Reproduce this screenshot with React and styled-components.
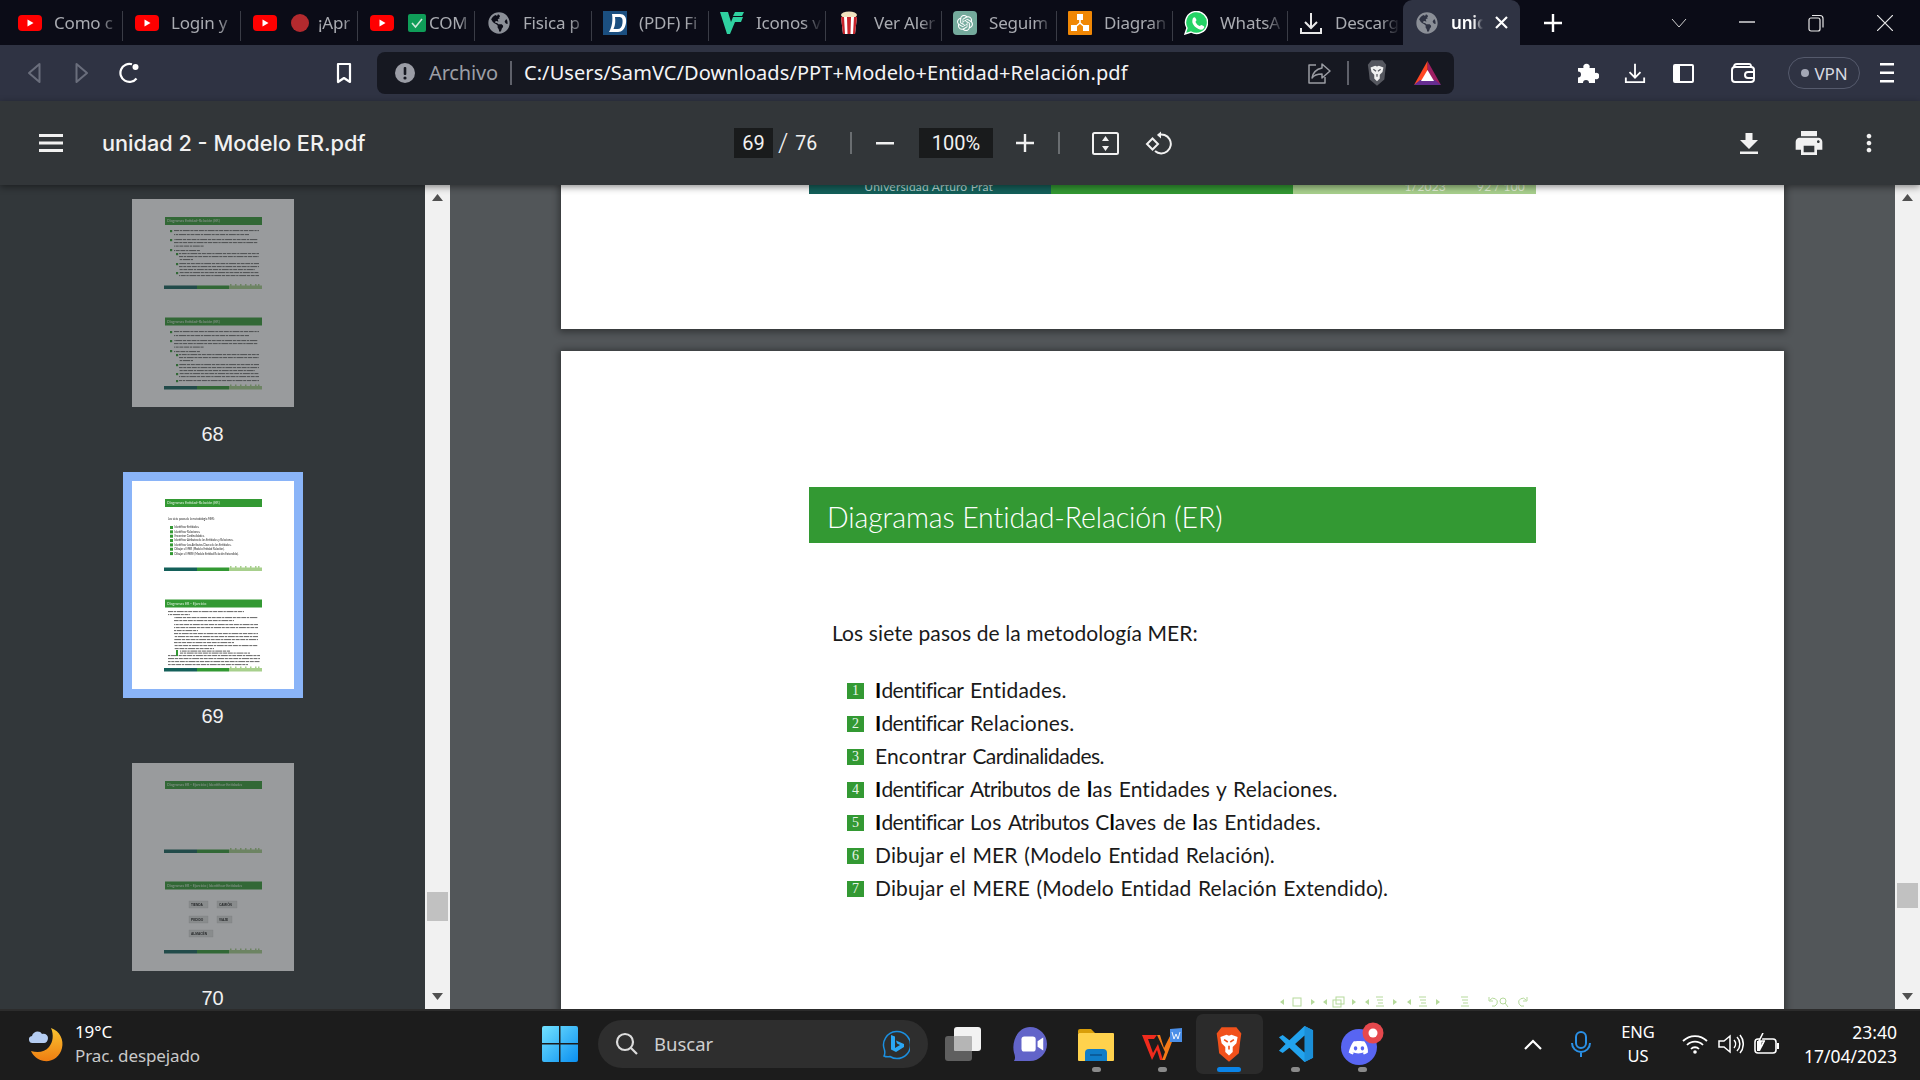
import React from 'react';
import styled, { createGlobalStyle } from 'styled-components';
import { FaGlobeAmericas } from 'react-icons/fa';
import { SiOpenai } from 'react-icons/si';
import { MdPrint, MdMoreVert } from 'react-icons/md';

const Global = createGlobalStyle`
  html, body { margin: 0; padding: 0; width: 1920px; height: 1080px; overflow: hidden; background: #1c1c1c; }
  * { box-sizing: border-box; }
`;

const Screen = styled.div`
  width: 1920px;
  height: 1080px;
  display: flex;
  flex-direction: column;
  font-family: "Noto Sans", sans-serif;
  overflow: hidden;
`;

/* ---------- tab strip ---------- */
const TabStrip = styled.div`
  height: 45px;
  flex: none;
  display: flex;
  padding-left: 6px;
  background: #0b0c17;
`;

const Tab = styled.div`
  width: ${(p) => p.$w}px;
  height: 45px;
  flex: none;
  display: flex;
  align-items: center;
  gap: ${(p) => p.$gap ?? 12}px;
  padding: 0 3px 0 ${(p) => p.$pad ?? 12}px;
  position: relative;
  &::after {
    content: "";
    display: ${(p) => (p.$last ? 'none' : 'block')};
    position: absolute;
    right: 0;
    top: 11px;
    width: 1px;
    height: 30px;
    background: #3a3c46;
  }
`;

const ActiveTab = styled(Tab)`
  background: #2f3343;
  border-radius: 9px 9px 0 0;
  padding-right: 12px;
`;

const TabTitle = styled.span`
  flex: 1;
  min-width: 0;
  margin: -1px 0 0 ${(p) => p.$ml || 0}px;
  white-space: nowrap;
  font-size: 17px;
  letter-spacing: -0.2px;
  color: ${(p) => (p.$active ? '#fff' : '#a9abb1')};
  font-weight: ${(p) => (p.$active ? 600 : 400)};
  -webkit-mask-image: linear-gradient(to right, #000 70%, transparent 100%);
  mask-image: linear-gradient(to right, #000 70%, transparent 100%);
`;

const NewTab = styled.div`
  width: 24px;
  margin-left: 21px;
  display: flex;
  align-items: center;
  justify-content: center;
`;

const WinButton = styled.div`
  width: ${(p) => p.$w}px;
  margin-left: ${(p) => p.$ml || 0}px;
  display: flex;
  align-items: center;
  justify-content: center;
`;

/* ---------- browser toolbar ---------- */
const Toolbar = styled.div`
  height: 56px;
  flex: none;
  display: flex;
  align-items: center;
  padding-left: 10px;
  background: #2f3343;
`;

const ToolSlot = styled.div`
  width: 48px;
  height: 42px;
  flex: none;
  margin-left: ${(p) => p.$ml || 0}px;
  display: flex;
  align-items: center;
  justify-content: center;
  color: #fff;
`;

const Address = styled.div`
  width: 1077px;
  height: 42px;
  flex: none;
  margin-left: 9px;
  padding: 0 13px 0 18px;
  display: flex;
  align-items: center;
  background: #161821;
  border-radius: 8px;
`;

const Scheme = styled.span`
  margin: -2px 0 0 14px;
  font-size: 20px;
  letter-spacing: -0.15px;
  color: #9c9ea6;
`;

const AddressSep = styled.span`
  width: 2px;
  height: 24px;
  margin: ${(p) => p.$m || '0 12px'};
  background: #5f616a;
`;

const Url = styled.span`
  margin-top: -2px;
  font-size: 20px;
  letter-spacing: 0.07px;
  color: #f4f4f6;
  white-space: nowrap;
`;

const AddressRight = styled.div`
  margin-left: auto;
  display: flex;
  align-items: center;
`;

const AddressGap = styled.span`
  width: 26px;
`;

const VpnPill = styled.div`
  width: 72px;
  height: 32px;
  flex: none;
  margin-left: 21px;
  display: flex;
  align-items: center;
  justify-content: center;
  gap: 6px;
  font-size: 17px;
  letter-spacing: -0.2px;
  color: #d8dae0;
  border: 1.5px solid #555a6c;
  border-radius: 16px;
  &::before {
    content: "";
    width: 8px;
    height: 8px;
    border-radius: 50%;
    background: #a3a7b5;
  }
`;

/* ---------- pdf toolbar ---------- */
const PdfBar = styled.div`
  height: 84px;
  flex: none;
  display: flex;
  align-items: center;
  position: relative;
  z-index: 3;
  background: #323639;
  color: #f1f1f1;
  box-shadow: 0 2px 7px rgba(0, 0, 0, 0.45);
`;

const PdfLeft = styled.div`
  width: 734px;
  flex: none;
  display: flex;
  align-items: center;
  padding-left: 39px;
`;

const DocTitle = styled.span`
  margin-left: 39px;
  font-family: "Inter", sans-serif;
  font-size: 21.7px;
  font-weight: 500;
  white-space: nowrap;
`;

const NumBox = styled.div`
  width: ${(p) => p.$w}px;
  height: 30px;
  flex: none;
  margin-left: ${(p) => p.$ml || 0}px;
  display: flex;
  align-items: center;
  justify-content: center;
  font-family: "Roboto", sans-serif;
  font-size: 20px;
  background: #191b1c;
`;

const PageTotal = styled.span`
  margin-left: 5px;
  width: 72px;
  flex: none;
  display: flex;
  align-items: center;
  gap: 7px;
  font-family: "Roboto", sans-serif;
  font-size: 19.5px;
`;

const Slash = styled.span`
  font-size: 26px;
  font-weight: 300;
`;

const BarSep = styled.span`
  width: 2px;
  height: 22px;
  flex: none;
  margin-left: ${(p) => p.$ml || 0}px;
  background: #6a6e71;
`;

const BarIcon = styled.div`
  width: 48px;
  height: 40px;
  flex: none;
  margin-left: ${(p) => p.$ml || 0}px;
  display: flex;
  align-items: center;
  justify-content: center;
`;

/* ---------- main area ---------- */
const Main = styled.div`
  height: 824px;
  flex: none;
  display: flex;
  overflow: hidden;
`;

const Sidebar = styled.div`
  width: 425px;
  flex: none;
  padding-top: 14px;
  display: flex;
  flex-direction: column;
  align-items: center;
  background: #32373a;
`;

const ThumbItem = styled.div`
  height: 282px;
  flex: none;
  display: flex;
  flex-direction: column;
  align-items: center;
`;

const Thumb = styled.div`
  width: 162px;
  height: 208px;
  flex: none;
  background: #fff;
  opacity: ${(p) => (p.$selected ? 1 : 0.5)};
  box-shadow: ${(p) => (p.$selected ? '0 0 0 9px #8ab4f8' : 'none')};
  svg { display: block; filter: blur(0.3px); }
`;

const ThumbLabel = styled.div`
  margin-top: 15px;
  font-family: "Liberation Sans", sans-serif;
  font-size: 20px;
  line-height: 24px;
  color: #f1f1f1;
`;

const Track = styled.div`
  width: 25px;
  flex: none;
  display: flex;
  flex-direction: column;
  align-items: center;
  padding: 9px 0;
  background: #f1f1f1;
`;

const TrackThumb = styled.div`
  width: 21px;
  height: ${(p) => p.$h}px;
  flex: none;
  margin-top: ${(p) => p.$top}px;
  background: #c1c1c1;
`;

const TrackDown = styled.div`
  margin-top: auto;
  display: flex;
`;

const Viewer = styled.div`
  flex: 1;
  padding-left: 111px;
  display: flex;
  flex-direction: column;
  align-items: flex-start;
  overflow: hidden;
  background: #525659;
`;

const Page = styled.div`
  width: 1223px;
  height: ${(p) => p.$h}px;
  flex: none;
  padding: ${(p) => p.$pt || 0}px 0 0 248px;
  margin-bottom: 22px;
  background: #fff;
  box-shadow: 0 1px 7px 2px rgba(0, 0, 0, 0.4);
`;

const FootStrip = styled.div`
  width: 727px;
  height: 9px;
  display: flex;
  overflow: hidden;
`;

const FootCell = styled.div`
  width: ${(p) => p.$w}px;
  flex: none;
  display: flex;
  justify-content: flex-end;
  gap: 31px;
  padding-right: ${(p) => p.$pr || 0}px;
  overflow: hidden;
  background: ${(p) => p.$bg};
  color: ${(p) => p.$fg};
  font-family: "Lato", sans-serif;
  font-size: 12px;
  letter-spacing: 0.2px;
  line-height: 3px;
  white-space: nowrap;
`;

const SlideHead = styled.div`
  width: 727px;
  height: 56px;
  display: flex;
  align-items: center;
  padding: 4px 0 0 18px;
  background: #339933;
  color: #fff;
  font-family: "Lato", sans-serif;
  font-size: 28.5px;
  font-weight: 300;
  letter-spacing: -0.1px;
  white-space: nowrap;
`;

const Intro = styled.div`
  margin: 75px 0 0 23px;
  font-family: "Lato", sans-serif;
  font-size: 21px;
  line-height: 30px;
  letter-spacing: 0.1px;
  color: #1a1a1a;
`;

const Steps = styled.ol`
  list-style: none;
  margin: 25px 0 0 38px;
  padding: 0;
`;

const Step = styled.li`
  height: 33px;
  display: flex;
  align-items: center;
  gap: 11px;
  font-family: "Lato", sans-serif;
  font-size: 21px;
  letter-spacing: 0.15px;
  word-spacing: 1px;
  color: #1a1a1a;
  white-space: pre;
`;

const StepNum = styled.span`
  width: 17px;
  height: 16px;
  flex: none;
  margin-top: 3px;
  display: flex;
  align-items: center;
  justify-content: center;
  background: #339933;
  color: #e8f4e8;
  font-family: "Liberation Serif", serif;
  font-size: 14px;
  letter-spacing: 0;
`;

const Heavy = styled.span`
  font-weight: 700;
  color: #000;
`;

const Tight = styled.span`
  letter-spacing: -0.55px;
`;

const NavIcons = styled.div`
  margin: 92px 0 0 471px;
  width: 250px;
  height: 12px;
  svg { display: block; }
`;

/* ---------- taskbar ---------- */
const Taskbar = styled.div`
  height: 71px;
  flex: none;
  display: flex;
  align-items: center;
  padding-bottom: 3px;
  position: relative;
  z-index: 4;
  background: #1c1c1c;
  border-top: 2px solid #2c2c2c;
  color: #fff;
`;

const Weather = styled.div`
  width: 542px;
  flex: none;
  padding-left: 28px;
  display: flex;
  align-items: center;
  gap: 11px;
`;

const TwoLines = styled.div`
  display: flex;
  flex-direction: column;
  align-items: ${(p) => p.$align || 'flex-start'};
  font-size: ${(p) => p.$fs || 17}px;
  line-height: 24px;
  letter-spacing: -0.1px;
  white-space: nowrap;
`;

const Muted = styled.span`
  color: #c9c9c9;
`;

const StartBtn = styled.div`
  width: 36px;
  height: 36px;
  flex: none;
  display: flex;
`;

const Search = styled.div`
  width: 330px;
  height: 48px;
  flex: none;
  margin-left: 20px;
  padding: 0 18px 0 17px;
  display: flex;
  align-items: center;
  background: #2e2e2e;
  border-radius: 24px;
`;

const SearchText = styled.span`
  margin: -1px 0 0 15px;
  flex: 1;
  font-size: 18.5px;
  color: #cfcfcf;
`;

const Apps = styled.div`
  margin-left: 2px;
  display: flex;
`;

const AppSlot = styled.div`
  width: 66.5px;
  height: 60px;
  flex: none;
  padding-top: 9px;
  display: flex;
  flex-direction: column;
  align-items: center;
  border-radius: 7px;
  background: ${(p) => (p.$active ? '#2b2b2b' : 'transparent')};
`;

const AppIcon = styled.div`
  height: 42px;
  flex: none;
  display: flex;
  align-items: center;
  justify-content: center;
`;

const AppDot = styled.span`
  width: ${(p) => (p.$active ? 24 : 9)}px;
  height: 5px;
  margin-top: auto;
  margin-bottom: 2px;
  border-radius: 3px;
  background: ${(p) => (p.$active ? '#0a84e8' : p.$none ? 'transparent' : '#8a8a8a')};
`;

const Tray = styled.div`
  margin-left: auto;
  padding-right: 23px;
  display: flex;
  align-items: center;
`;

const TraySlot = styled.div`
  width: ${(p) => p.$w}px;
  margin-left: ${(p) => p.$ml || 0}px;
  flex: none;
  display: flex;
  align-items: center;
  justify-content: center;
`;

const Clock = styled(TwoLines)`
  width: 112px;
  letter-spacing: 0;
`;

/* ---------- favicons and small drawings ---------- */
const YouTube = () => (
  <svg width="24" height="16" viewBox="0 0 24 16" style={{ flex: 'none' }}>
    <rect width="24" height="16" rx="4" fill="#f00" />
    <path d="M9.5 4.5v7l6-3.5z" fill="#fff" />
  </svg>
);

const RedDot = () => (
  <svg width="18" height="18" viewBox="0 0 18 18" style={{ flex: 'none' }}>
    <circle cx="9" cy="9" r="9" fill="#b32a2e" />
  </svg>
);

const CheckBox = () => (
  <svg width="18" height="18" viewBox="0 0 18 18" style={{ flex: 'none' }}>
    <rect width="18" height="18" rx="2" fill="#0f9d58" />
    <path d="M4 9l3.5 4L14 5" stroke="#cfe9db" strokeWidth="1.6" fill="none" />
  </svg>
);

const Globe = () => <FaGlobeAmericas size={22} color="#8b8f97" style={{ flex: 'none', margin: '0 1px' }} />;

const DLogo = () => (
  <svg width="24" height="24" viewBox="0 0 24 24" style={{ flex: 'none' }}>
    <rect width="24" height="24" fill="#1b4f80" />
    <path d="M9 3h8c4 0 7 3 6 9-1 6-4 9-8 9H6c3-5 4-12 3-18z" fill="#fff" />
    <path d="M12 6h4c3 0 4 2 3.5 6-.5 4-2 6-5 6h-4c2-4 2-8 1.500-12z" fill="#1b4f80" />
  </svg>
);

const VLogo = () => (
  <svg width="24" height="24" viewBox="0 0 24 24" style={{ flex: 'none' }}>
    <path d="M0 1h8l3 10 2-5h10l-2 5h-6l-5 12h-3z" fill="#2fd1a0" />
    <path d="M15 1h9l-2 4h-9z" fill="#2fd1a0" />
  </svg>
);

const Popcorn = () => (
  <svg width="18" height="24" viewBox="0 0 18 24" style={{ flex: 'none' }}>
    <ellipse cx="9" cy="4" rx="8" ry="3.5" fill="#f2e4c0" />
    <path d="M1 6h16l-2 17H3z" fill="#fff" />
    <path d="M1 6h3l1 17H3zM7 6h4l-.5 17h-3zM14 6h3l-2 17h-2z" fill="#c8242b" />
  </svg>
);

const GptLogo = () => (
  <svg width="24" height="24" viewBox="0 0 24 24" style={{ flex: 'none' }}>
    <rect width="24" height="24" rx="4" fill="#74aa9c" />
    <g transform="translate(4 4)"><SiOpenai size={16} color="#fff" /></g>
  </svg>
);

const DiagramLogo = () => (
  <svg width="24" height="24" viewBox="0 0 24 24" style={{ flex: 'none' }}>
    <rect width="24" height="24" rx="1" fill="#f08705" />
    <path d="M12 8v5M6 17l6-5 6 5" stroke="#fff" strokeWidth="1.6" fill="none" />
    <rect x="9" y="3" width="6" height="6" fill="#fff" />
    <rect x="3" y="14" width="6" height="6" fill="#fff" />
    <rect x="15" y="14" width="6" height="6" fill="#fff" />
  </svg>
);

const Whats = () => (
  <svg width="24" height="24" viewBox="0 0 24 24" style={{ flex: 'none' }}>
    <path d="M1 23l2-6a11 11 0 1 1 4 4z" fill="#25d366" stroke="#fff" strokeWidth="1.4" />
    <path transform="translate(5 5)" d="M4 2c1-1 2-1 2.500 0l1 2c0 1-1 1-1 2 1 2 2 3 4 4 1 0 1-1 2-1l2 1c1 .5 1 1.500 0 2.500-1 1.500-3 1.500-5 .5-3-1.500-5-3.500-6-6-.5-2 0-4 .5-5z" fill="#fff" />
  </svg>
);

const TrayDownload = ({ color = '#fff', size = 24 }) => (
  <svg width={size} height={size} viewBox="0 0 24 24" fill="none" stroke={color} strokeWidth="2" style={{ flex: 'none' }}>
    <path d="M12 2v15M6 11l6 6 6-6M2 17v5h20v-5" />
  </svg>
);

const Triangle = ({ flip, color = '#6a6e7c' }) => (
  <svg width="14" height="22" viewBox="0 0 14 22" fill="none" stroke={color} strokeWidth="2" strokeLinejoin="round" style={flip ? { transform: 'scaleX(-1)' } : undefined}>
    <path d="M12.500 2L2 11l10.500 9z" />
  </svg>
);

const Reload = () => (
  <svg width="22" height="22" viewBox="0 0 22 22" fill="none" stroke="#fff" strokeWidth="2.200">
    <path d="M17.500 16.500A9 9 0 1 1 13 2.300" />
    <circle cx="16.500" cy="5" r="3" fill="#fff" stroke="none" />
  </svg>
);

const Bookmark = () => (
  <svg width="16" height="22" viewBox="0 0 16 22" fill="none" stroke="#fff" strokeWidth="2.200" strokeLinejoin="round">
    <path d="M2 2h12v18l-6-4-6 4z" />
  </svg>
);

const InfoIcon = () => (
  <svg width="20" height="20" viewBox="0 0 20 20" style={{ flex: 'none' }}>
    <circle cx="10" cy="10" r="10" fill="#9b9da6" />
    <rect x="8.700" y="4" width="2.600" height="8" rx="1" fill="#161821" />
    <circle cx="10" cy="15" r="1.600" fill="#161821" />
  </svg>
);

const Share = () => (
  <svg width="24" height="24" viewBox="0 0 24 24" fill="none" stroke="#9a9ca3" strokeWidth="1.500" strokeLinejoin="round" style={{ flex: 'none' }}>
    <path d="M9 4H2v18h16v-6" />
    <path d="M15 3l8 7-8 7v-4c-5 0-8 1-10 4 1-6 5-9 10-10z" />
  </svg>
);

const Lion = ({ w, h, shield, face }) => (
  <svg width={w} height={h} viewBox="0 0 24 30" style={{ flex: 'none' }}>
    <path d="M6 1h12l4 5-1 7-1 9-8 7-8-7-1-9-1-7z" fill={shield} />
    <path d="M5 9l5-2 2 1 2-1 5 2-1 5-3 3v4l-3 3-3-3v-4l-3-3z" fill={face} />
    <path d="M8 11l3 2M16 11l-3 2M12 16v3" stroke={shield} strokeWidth="1.300" fill="none" />
  </svg>
);

const BatLogo = () => (
  <svg width="27" height="24" viewBox="0 0 27 24" style={{ flex: 'none' }}>
    <path d="M13.500 0L27 24 13.500 16z" fill="#9e1f63" />
    <path d="M13.500 0L0 24l13.500-8z" fill="#ff4724" />
    <path d="M0 24h27l-6-5H6z" fill="#662d91" />
    <path d="M13.500 9L20 20H7z" fill="#fff" />
  </svg>
);

const Puzzle = () => (
  <svg width="23" height="24" viewBox="0 0 23 24" fill="#fff">
    <path d="M2 7h5.500a3.200 3.200 0 1 1 6 0H19v5a3.200 3.200 0 1 1 0 6v4h-6a3 3 0 0 0-6 0H2v-5.500a3 3 0 0 0 0-6z" />
  </svg>
);

const SidePanel = () => (
  <svg width="21" height="19" viewBox="0 0 21 19" style={{ display: 'block' }}>
    <rect x="1" y="1" width="19" height="17" rx="1" fill="none" stroke="#fff" strokeWidth="2" />
    <rect x="1" y="1" width="6" height="17" fill="#fff" />
  </svg>
);

const Wallet = () => (
  <svg width="24" height="20" viewBox="0 0 24 20" fill="none" stroke="#fff" strokeWidth="2">
    <path d="M3 4c0-2 1-3 3-3h12c2 0 2 1 2 3" />
    <rect x="1" y="4" width="22" height="15" rx="3" />
    <path d="M23 9h-6a3 3 0 0 0 0 6h6" />
  </svg>
);

const Lines = ({ w, h, t, gap, color = '#fff' }) => (
  <svg width={w} height={h} viewBox={`0 0 ${w} ${h}`}>
    {[0, 1, 2].map((i) => (
      <rect key={i} y={i * gap} width={w} height={t} fill={color} />
    ))}
  </svg>
);

const FitPage = () => (
  <svg width="27" height="23" viewBox="0 0 27 23">
    <rect x="1" y="1" width="25" height="21" rx="1.500" fill="none" stroke="#f1f1f1" strokeWidth="2" />
    <path d="M13.500 4l3.500 5h-7zM13.500 19l-3.500-5h7z" fill="#f1f1f1" />
  </svg>
);

const RotatePage = () => (
  <svg width="27" height="27" viewBox="0 0 27 27" fill="none" stroke="#f1f1f1" strokeWidth="2">
    <path d="M7.500 8.500L2 14l5.500 5.500L13 14z" />
    <path d="M13 5a9.500 9.500 0 1 1-3 16" />
    <path d="M16 1.500v7L12 5z" fill="#f1f1f1" stroke="none" />
  </svg>
);

const SaveIcon = () => (
  <svg width="18" height="21" viewBox="0 0 18 21" fill="#f1f1f1" style={{ display: 'block' }}>
    <path d="M5.500 0h7v7H18l-9 9-9-9h5.500z" />
    <rect y="18.500" width="18" height="2.500" />
  </svg>
);

const ScrollArrow = ({ down }) => (
  <svg width="11" height="7" viewBox="0 0 11 7" style={{ display: 'block', flex: 'none' }}>
    <path d={down ? 'M0 0h11L5.500 7z' : 'M5.500 0L11 7H0z'} fill="#505050" />
  </svg>
);

/* ---------- thumbnails ---------- */
const Mini = ({ y, title }) => (
  <g>
    <rect x="33" y={y} width="97" height="8" fill="#339933" />
    <text x="35" y={y + 5.4} fontSize="3.700" fill="#dff0df" fontFamily="Lato, sans-serif">{title}</text>
    <rect x="32" y={y + 68.500} width="33" height="3.500" fill="#14605a" />
    <rect x="65" y={y + 68.500} width="32" height="3.500" fill="#339933" />
    <rect x="97" y={y + 68.500} width="33" height="3.500" fill="#a8d08d" />
    {[98, 103, 108, 113, 118, 123, 126].map((x) => (
      <rect key={x} x={x} y={y + 67} width="1.500" height="2" fill="#a8d08d" />
    ))}
  </g>
);

// body text of a page thumbnail is too small to read, so it is drawn as dashed word runs
const Body = ({ rows }) => (
  <g stroke="#666" strokeWidth="1" strokeDasharray="5 .7 2.300 .7 7 .7 3.100 .7 4 .7">
    {rows.map(([x, y, w], i) => (
      <path key={i} d={`M${x} ${y + 0.6}h${w}`} strokeDashoffset={i * 3.7} />
    ))}
  </g>
);

const Dots = ({ rows }) => (
  <g fill="#339933">
    {rows.map(([x, y], i) => (
      <rect key={i} x={x} y={y} width="2.200" height="2.200" />
    ))}
  </g>
);

const bodyA = [
  [42, 31, 85], [42, 35, 75],
  [42, 40, 84], [42, 43, 84], [42, 46.500, 30],
  [42, 51, 26],
  [47, 54, 80], [47, 57, 80], [47, 60, 14],
  [47, 64, 80], [47, 67, 80], [47, 70, 76],
  [47, 73, 80], [47, 76, 80],
];

const bodyB = [
  [42, 132, 85], [42, 136, 75],
  [42, 141, 84], [42, 144, 84], [42, 147.500, 30],
  [42, 152, 26],
  [47, 155, 80], [47, 158, 80], [47, 161, 14],
  [47, 165, 80], [47, 168, 80], [47, 171, 76],
  [47, 174, 80], [47, 177, 80], [47, 181, 80],
];

const bodyC = [
  [36, 130, 76], [36, 133, 22],
  [42, 136, 84], [42, 139, 60],
  [42, 143, 84], [42, 146, 84], [42, 149, 24],
  [42, 152, 84], [42, 155, 84], [42, 158, 84],
  [42, 161, 60], [42, 164, 84], [42, 167, 40],
  [48, 169.500, 50], [48, 171.500, 70],
  [36, 174, 92], [36, 177, 92], [36, 180, 92], [36, 183, 80],
];

const miniSteps = [
  'Identificar Entidades.',
  'Identificar Relaciones.',
  'Encontrar Cardinalidades.',
  'Identificar Atributos de las Entidades y Relaciones.',
  'Identificar Los Atributos Claves de las Entidades.',
  'Dibujar el MER (Modelo Entidad Relación).',
  'Dibujar el MERE (Modelo Entidad Relación Extendido).',
];

const boxes = [
  [57, 138, 19, 'TIENDA'], [85, 138, 20, 'CAMIÓN'],
  [57, 153, 19, 'PEDIDO'], [85, 153, 15, 'VIAJE'],
  [57, 167, 24, 'ALMACÉN'],
];

const Thumb68 = () => (
  <svg width="162" height="208" viewBox="0 0 162 208">
    <Mini y={18} title="Diagramas Entidad-Relación (ER)" />
    <Body rows={bodyA} />
    <Dots rows={[[38, 31], [38, 40], [38, 50], [44, 54], [44, 64], [44, 73]]} />
    <Mini y={118.500} title="Diagramas Entidad-Relación (ER)" />
    <Body rows={bodyB} />
    <Dots rows={[[38, 132], [38, 141], [38, 151], [44, 155], [44, 165], [44, 174], [44, 181]]} />
  </svg>
);

const Thumb69 = () => (
  <svg width="162" height="208" viewBox="0 0 162 208">
    <Mini y={18} title="Diagramas Entidad-Relación (ER)" />
    <text x="36" y="38.500" fontSize="2.700" fill="#222" fontFamily="Lato, sans-serif">Los siete pasos de la metodología MER:</text>
    {miniSteps.map((s, i) => (
      <g key={s}>
        <rect x="38" y={45 + i * 4.350} width="3" height="3" fill="#339933" />
        <text x="42.500" y={47.400 + i * 4.350} fontSize="2.700" fill="#222" fontFamily="Lato, sans-serif">{s}</text>
      </g>
    ))}
    <Mini y={118.500} title="Diagramas ER - Ejercicio" />
    <Body rows={bodyC} />
    <rect x="44" y="169" width="2" height="6" fill="#339933" />
  </svg>
);

const Thumb70 = () => (
  <svg width="162" height="208" viewBox="0 0 162 208">
    <Mini y={18} title="Diagramas ER - Ejercicio | Identificar Entidades" />
    <Mini y={118.500} title="Diagramas ER - Ejercicio | Identificar Entidades" />
    {boxes.map(([x, y, w, t]) => (
      <g key={t}>
        <rect x={x} y={y} width={w} height="7" fill="#e0e0e0" stroke="#bbb" strokeWidth="0.300" />
        <text x={x + 2} y={y + 4.800} fontSize="3.200" fontWeight="700" fill="#111" fontFamily="Liberation Sans, sans-serif">{t}</text>
      </g>
    ))}
  </svg>
);

/* ---------- beamer nav symbols ---------- */
const NavSymbols = () => (
  <svg width="250" height="12" viewBox="0 0 250 12" fill="none" stroke="#b5d99b" strokeWidth="1">
    <g fill="#b5d99b" stroke="none">
      <path d="M0 6l4-3v6zM31 3l4 3-4 3zM43 6l4-3v6zM72 3l4 3-4 3zM85 6l4-3v6zM113 3l4 3-4 3zM127 6l4-3v6zM156 3l4 3-4 3z" />
    </g>
    <rect x="13" y="2" width="8" height="8" />
    <rect x="53" y="4" width="8" height="7" />
    <rect x="56" y="1" width="8" height="7" />
    {[96, 139, 181].map((x) => (
      <path key={x} d={`M${x} 1h7M${x + 1} 4h6M${x + 2} 7h5M${x} 10h8`} />
    ))}
    <path d="M210 4a4 4 0 1 1 2 6M209 1v4h4" />
    <circle cx="223" cy="5" r="3" />
    <path d="M225 7l3 4" />
    <path d="M246 4a4 4 0 1 0-2 6M247 1v4h-4" />
  </svg>
);

/* ---------- taskbar icons ---------- */
const WeatherIcon = () => (
  <svg width="36" height="36" viewBox="0 0 36 36" style={{ flex: 'none' }}>
    <defs>
      <linearGradient id="moon" x1="0" y1="0" x2="0" y2="1">
        <stop offset="0" stopColor="#fbc531" />
        <stop offset="1" stopColor="#ee7d11" />
      </linearGradient>
    </defs>
    <path d="M23 2c9 3 13 12 11 20-2 9-10 14-18 13-6-1-11-5-13-10 7 2 14 1 18-4 4-5 5-12 2-19z" fill="url(#moon)" />
    <path d="M5 17a3.500 3.500 0 0 1-1-7c1-5 8-6 10-2 3-1 6 1 6 4 0 3-2 5-4 5z" fill="#b5cdf2" />
  </svg>
);

const WinLogo = () => (
  <svg width="36" height="36" viewBox="0 0 36 36">
    <defs>
      <linearGradient id="win" x1="0" y1="0" x2="1" y2="1">
        <stop offset="0" stopColor="#72e2ff" />
        <stop offset="1" stopColor="#0a8ff0" />
      </linearGradient>
    </defs>
    <path d="M2 0h15v17H0V2a2 2 0 0 1 2-2zM18.500 0H34a2 2 0 0 1 2 2v15H18.500zM0 18.500h17V36H2a2 2 0 0 1-2-2zM18.500 18.500H36V34a2 2 0 0 1-2 2H18.500z" fill="url(#win)" />
  </svg>
);

const Magnifier = () => (
  <svg width="24" height="24" viewBox="0 0 24 24" fill="none" stroke="#dcdcdc" strokeWidth="2.200" style={{ flex: 'none' }}>
    <circle cx="10" cy="10" r="8" />
    <path d="M16 16l6 6" />
  </svg>
);

const BingIcon = () => (
  <svg width="30" height="31" viewBox="0 0 30 31" fill="none" style={{ flex: 'none' }}>
    <path d="M4 27c1-2 1-4 .5-6A13.500 13.500 0 1 1 10 27.500C8 28 6 28 4 27z" stroke="#1b8fe0" strokeWidth="1.500" />
    <path d="M11 6l4 1.500V19l5-3-3-1.500-1-3 8 3.500v3l-8 5-5-2.500z" fill="#2aa7f5" />
  </svg>
);

const TaskView = () => (
  <svg width="36" height="34" viewBox="0 0 36 34">
    <rect x="0" y="9" width="27" height="25" rx="3" fill="#5f5f5f" />
    <rect x="9" y="0" width="27" height="24" rx="3" fill="#f2f2f2" />
    <rect x="9" y="9" width="18" height="15" rx="1" fill="#b5b5b5" />
  </svg>
);

const MeetIcon = () => (
  <svg width="34" height="36" viewBox="0 0 36 36">
    <path d="M18 0c10 0 18 8 18 18S28 36 18 36H1c2-3 1-6 0-9-3-13 5-27 17-27z" fill="#6264c9" />
    <rect x="9" y="10" width="15" height="16" rx="3" fill="#fff" />
    <path d="M26 15l6-4v14l-6-4z" fill="#fff" />
  </svg>
);

const FolderIcon = () => (
  <svg width="36" height="33" viewBox="0 0 36 33">
    <path d="M0 3a2 2 0 0 1 2-2h11l4 4h-17z" fill="#d99e0a" />
    <rect y="5" width="36" height="28" rx="1" fill="#ffd24d" />
    <path d="M7 33v-8a4 4 0 0 1 4-4h14a4 4 0 0 1 4 4v8z" fill="#0f7dc8" />
    <rect x="12" y="26" width="12" height="2" fill="#0a5d9c" />
  </svg>
);

const WpsIcon = () => (
  <svg width="41" height="35" viewBox="0 0 41 35">
    <path d="M0 8h15l-3 4H6l5 14 5-9 5 16h-3L15 23l-5 10z" fill="#f02b1d" />
    <path d="M18 8l4 13 7-14h4L23 33h-3l3-8-8-17z" fill="#f57a17" />
    <path d="M28 2l12-1v14H28z" fill="#4a8fe8" />
    <path d="M30 5l2 7 2-5 2 5 2-7" fill="none" stroke="#fff" strokeWidth="0.900" />
  </svg>
);

const VsCode = () => (
  <svg width="36" height="36" viewBox="0 0 36 38">
    <path d="M27 0l9 4.500v29L27 38 11 23l-7 5.500L0 26l7-7-7-7 4-2.500L11 15z" fill="#22a3ee" />
    <path d="M27 0l9 4.500v29L27 38z" fill="#1b8fd8" />
    <path d="M27 10l-10 9 10 9z" fill="#1c1c1c" />
  </svg>
);

const DiscordIcon = () => (
  <svg width="42" height="42" viewBox="0 0 42 42" style={{ overflow: 'visible' }}>
    <circle cx="18" cy="24" r="18" fill="#5865f2" />
    <svg x="7" y="13" width="22" height="22" viewBox="0 0 640 512">
      <path fill="#fff" d="M160 96c50-20 270-20 320 0 70 90 110 210 100 320-40 30-80 50-120 60l-30-50c20-7 35-15 50-25-120 55-240 55-360 0 15 10 30 18 50 25l-30 50c-40-10-80-30-120-60C50 306 90 186 160 96zm60 140c-30 0-50 25-50 60s20 60 50 60 50-25 50-60-20-60-50-60zm200 0c-30 0-50 25-50 60s20 60 50 60 50-25 50-60-20-60-50-60z" />
    </svg>
    <circle cx="32" cy="10" r="10.500" fill="#e5484d" />
    <circle cx="32" cy="10" r="4.500" fill="#fff" />
  </svg>
);

const Mic = () => (
  <svg width="20" height="26" viewBox="0 0 20 26" fill="none" stroke="#2a90e6" strokeWidth="2">
    <rect x="5" y="1" width="10" height="16" rx="5" />
    <path d="M1 12a9 9 0 0 0 18 0M10 21v5" />
  </svg>
);

const Chevron = () => (
  <svg width="18" height="11" viewBox="0 0 18 11" fill="none" stroke="#fff" strokeWidth="2.200">
    <path d="M1 10l8-8 8 8" />
  </svg>
);

const Wifi = () => (
  <svg width="26" height="20" viewBox="0 0 26 20" fill="none" stroke="#fff" strokeWidth="1.800">
    <path d="M1 7a17 17 0 0 1 24 0M5 11a11 11 0 0 1 16 0M9 15a5.500 5.500 0 0 1 8 0" />
    <circle cx="13" cy="18" r="1.800" fill="#fff" stroke="none" />
  </svg>
);

const Volume = () => (
  <svg width="26" height="22" viewBox="0 0 26 22" fill="none" stroke="#fff" strokeWidth="1.500">
    <path d="M1 8h5l6-5v16l-6-5H1z" />
    <path d="M16 7a6 6 0 0 1 0 8M19 4a10 10 0 0 1 0 14M22 2a14 14 0 0 1 0 18" />
  </svg>
);

const Battery = () => (
  <svg width="26" height="22" viewBox="0 0 26 22" fill="none" stroke="#fff" strokeWidth="1.600">
    <rect x="1" y="6" width="21" height="14" rx="3" />
    <rect x="23" y="10" width="2" height="6" fill="#fff" stroke="none" />
    <path d="M3 8h8l-5 10H3z" fill="#fff" stroke="none" />
    <path d="M9 0L5 8h5l-3 6" fill="#1c1c1c" />
  </svg>
);

const tabs = [
  { w: 117, icons: [<YouTube key="a" />], title: 'Como c' },
  { w: 118, icons: [<YouTube key="a" />], title: 'Login y' },
  { w: 117, icons: [<YouTube key="a" />, <RedDot key="b" />], title: '¡Apr', gap: 14, ml: -5 },
  { w: 117, icons: [<YouTube key="a" />, <CheckBox key="b" />], title: 'COM', gap: 14, ml: -11 },
  { w: 117, icons: [<Globe key="a" />], title: 'Fisica p' },
  { w: 117, icons: [<DLogo key="a" />], title: '(PDF) Fi', pad: 11 },
  { w: 117, icons: [<VLogo key="a" />], title: 'Iconos v', pad: 11 },
  { w: 116, icons: [<Popcorn key="a" />], title: 'Ver Aler', pad: 14, gap: 16 },
  { w: 115, icons: [<GptLogo key="a" />], title: 'Seguim', pad: 11 },
  { w: 116, icons: [<DiagramLogo key="a" />], title: 'Diagran', pad: 11 },
  { w: 115, icons: [<Whats key="a" />], title: 'WhatsA', pad: 11 },
  { w: 115, icons: [<TrayDownload key="a" color="#e8e8e8" />], title: 'Descarg', pad: 11, last: true },
];

const Ident = () => (
  <>
    <Heavy>I</Heavy>
    <Tight>dentificar</Tight>
  </>
);

const steps = [
  <><Ident /> Entidades.</>,
  <><Ident /> Relaciones.</>,
  <>Encontrar <Tight>Cardinalidades</Tight>.</>,
  <><Ident /> <Tight>Atributos</Tight> de <Heavy>l</Heavy>as Entidades y Relaciones.</>,
  <><Ident /> Los <Tight>Atributos</Tight> C<Heavy>l</Heavy>aves de <Heavy>l</Heavy>as Entidades.</>,
  <>Dibujar el MER (Modelo Entidad Relación).</>,
  <>Dibujar el MERE (Modelo Entidad Relación Extendido).</>,
];

const apps = [
  { el: <TaskView />, none: true },
  { el: <MeetIcon />, none: true },
  { el: <FolderIcon /> },
  { el: <WpsIcon /> },
  { el: <Lion w={30} h={37} shield="#f1511b" face="#fff" />, active: true },
  { el: <VsCode /> },
  { el: <DiscordIcon /> },
];

export default function App() {
  return (
    <Screen>
      <Global />
      <TabStrip>
        {tabs.map((t) => (
          <Tab key={t.title} $w={t.w} $pad={t.pad} $gap={t.gap} $last={t.last}>
            {t.icons}
            <TabTitle $ml={t.ml}>{t.title}</TabTitle>
          </Tab>
        ))}
        <ActiveTab $w={117} $last>
          <Globe />
          <TabTitle $active>unic</TabTitle>
          <svg width="13" height="13" viewBox="0 0 13 13" stroke="#fff" strokeWidth="2.200" style={{ flex: 'none' }}>
            <path d="M1 1l11 11M12 1L1 12" />
          </svg>
        </ActiveTab>
        <NewTab>
          <svg width="18" height="18" viewBox="0 0 18 18" stroke="#fff" strokeWidth="2.400">
            <path d="M9 0v18M0 9h18" />
          </svg>
        </NewTab>
        <WinButton $w={16} $ml={106}>
          <svg width="16" height="10" viewBox="0 0 16 10" fill="none" stroke="#d0d0d0" strokeWidth="1">
            <path d="M1 1l7 8 7-8" />
          </svg>
        </WinButton>
        <WinButton $w={18} $ml={51}>
          <svg width="16" height="4" viewBox="0 0 16 4" stroke="#e8e8e8" strokeWidth="1.400"><path d="M0 1h16" /></svg>
        </WinButton>
        <WinButton $w={18} $ml={51}>
          <svg width="16" height="18" viewBox="0 0 16 18" fill="none" stroke="#e8e8e8" strokeWidth="1.200">
            <rect x="1" y="4" width="11" height="13" rx="2" />
            <path d="M4 1.500h8a3 3 0 0 1 3 3v9" />
          </svg>
        </WinButton>
        <WinButton $w={18} $ml={51}>
          <svg width="16" height="16" viewBox="0 0 16 16" stroke="#e8e8e8" strokeWidth="1.200"><path d="M0 0l16 16M16 0L0 16" /></svg>
        </WinButton>
      </TabStrip>

      <Toolbar>
        <ToolSlot><Triangle /></ToolSlot>
        <ToolSlot><Triangle flip /></ToolSlot>
        <ToolSlot><Reload /></ToolSlot>
        <ToolSlot $ml={166}><Bookmark /></ToolSlot>
        <Address>
          <InfoIcon />
          <Scheme>Archivo</Scheme>
          <AddressSep />
          <Url>C:/Users/SamVC/Downloads/PPT+Modelo+Entidad+Relación.pdf</Url>
          <AddressRight>
            <Share />
            <AddressSep $m="0 17px 0 16px" />
            <Lion w={22} h={28} shield="#55575f" face="#f1f1f1" />
            <AddressGap />
            <BatLogo />
          </AddressRight>
        </Address>
        <ToolSlot $ml={109}><Puzzle /></ToolSlot>
        <ToolSlot><TrayDownload size={22} /></ToolSlot>
        <ToolSlot><SidePanel /></ToolSlot>
        <ToolSlot $ml={12}><Wallet /></ToolSlot>
        <VpnPill>VPN</VpnPill>
        <ToolSlot $ml={3}><Lines w={14} h={20} t={2.5} gap={8.5} /></ToolSlot>
      </Toolbar>

      <PdfBar>
        <PdfLeft>
          <Lines w={24} h={18} t={3} gap={7.5} color="#f1f1f1" />
          <DocTitle>unidad 2 - Modelo ER.pdf</DocTitle>
        </PdfLeft>
        <NumBox $w={39}>69</NumBox>
        <PageTotal><Slash>/</Slash><span>76</span></PageTotal>
        <BarSep />
        <BarIcon $ml={9}>
          <svg width="18" height="3" viewBox="0 0 18 3" fill="#f1f1f1"><rect width="18" height="2.500" /></svg>
        </BarIcon>
        <NumBox $w={74} $ml={10}>100%</NumBox>
        <BarIcon $ml={8}>
          <svg width="18" height="18" viewBox="0 0 18 18" fill="#f1f1f1"><path d="M7.800 0h2.400v7.800H18v2.400h-7.800V18H7.800v-7.800H0V7.800h7.800z" /></svg>
        </BarIcon>
        <BarSep $ml={9} />
        <BarIcon $ml={21}><FitPage /></BarIcon>
        <BarIcon $ml={5}><RotatePage /></BarIcon>
        <BarIcon $ml={543}><SaveIcon /></BarIcon>
        <BarIcon $ml={12}><MdPrint size={32} /></BarIcon>
        <BarIcon $ml={12}><MdMoreVert size={28} /></BarIcon>
      </PdfBar>

      <Main>
        <Sidebar>
          <ThumbItem>
            <Thumb><Thumb68 /></Thumb>
            <ThumbLabel>68</ThumbLabel>
          </ThumbItem>
          <ThumbItem>
            <Thumb $selected><Thumb69 /></Thumb>
            <ThumbLabel>69</ThumbLabel>
          </ThumbItem>
          <ThumbItem>
            <Thumb><Thumb70 /></Thumb>
            <ThumbLabel>70</ThumbLabel>
          </ThumbItem>
        </Sidebar>
        <Track>
          <ScrollArrow />
          <TrackThumb $h={29} $top={691} />
          <TrackDown><ScrollArrow down /></TrackDown>
        </Track>
        <Viewer>
          <Page $h={144}>
            <FootStrip>
              <FootCell $w={242} $bg="#14605a" $fg="#bcd6d2" $pr={58}>Universidad Arturo Prat</FootCell>
              <FootCell $w={242} $bg="#339933" $fg="#fff" />
              <FootCell $w={243} $bg="#a8d08d" $fg="#e4f1d8" $pr={11}>
                <span>1/2023</span>
                <span>92 / 100</span>
              </FootCell>
            </FootStrip>
          </Page>
          <Page $h={900} $pt={136}>
            <SlideHead>Diagramas Entidad-Relación (ER)</SlideHead>
            <Intro>Los siete pasos de la metodología MER:</Intro>
            <Steps>
              {steps.map((parts, i) => (
                <Step key={i}>
                  <StepNum>{i + 1}</StepNum>
                  <span>{parts}</span>
                </Step>
              ))}
            </Steps>
            <NavIcons><NavSymbols /></NavIcons>
          </Page>
        </Viewer>
        <Track>
          <ScrollArrow />
          <TrackThumb $h={25} $top={682} />
          <TrackDown><ScrollArrow down /></TrackDown>
        </Track>
      </Main>

      <Taskbar>
        <Weather>
          <WeatherIcon />
          <TwoLines>
            <span>19°C</span>
            <Muted>Prac. despejado</Muted>
          </TwoLines>
        </Weather>
        <StartBtn><WinLogo /></StartBtn>
        <Search>
          <Magnifier />
          <SearchText>Buscar</SearchText>
          <BingIcon />
        </Search>
        <Apps>
          {apps.map((a, i) => (
            <AppSlot key={i} $active={a.active}>
              <AppIcon>{a.el}</AppIcon>
              <AppDot $active={a.active} $none={a.none} />
            </AppSlot>
          ))}
        </Apps>
        <Tray>
          <TraySlot $w={48}><Chevron /></TraySlot>
          <TraySlot $w={48}><Mic /></TraySlot>
          <TraySlot $w={66}>
            <TwoLines $align="center" $fs={16.5}><span>ENG</span><span>US</span></TwoLines>
          </TraySlot>
          <TraySlot $w={36} $ml={6}><Wifi /></TraySlot>
          <TraySlot $w={36}><Volume /></TraySlot>
          <TraySlot $w={36}><Battery /></TraySlot>
          <Clock $align="flex-end" $fs={17.5}><span>23:40</span><span>17/04/2023</span></Clock>
        </Tray>
      </Taskbar>
    </Screen>
  );
}
